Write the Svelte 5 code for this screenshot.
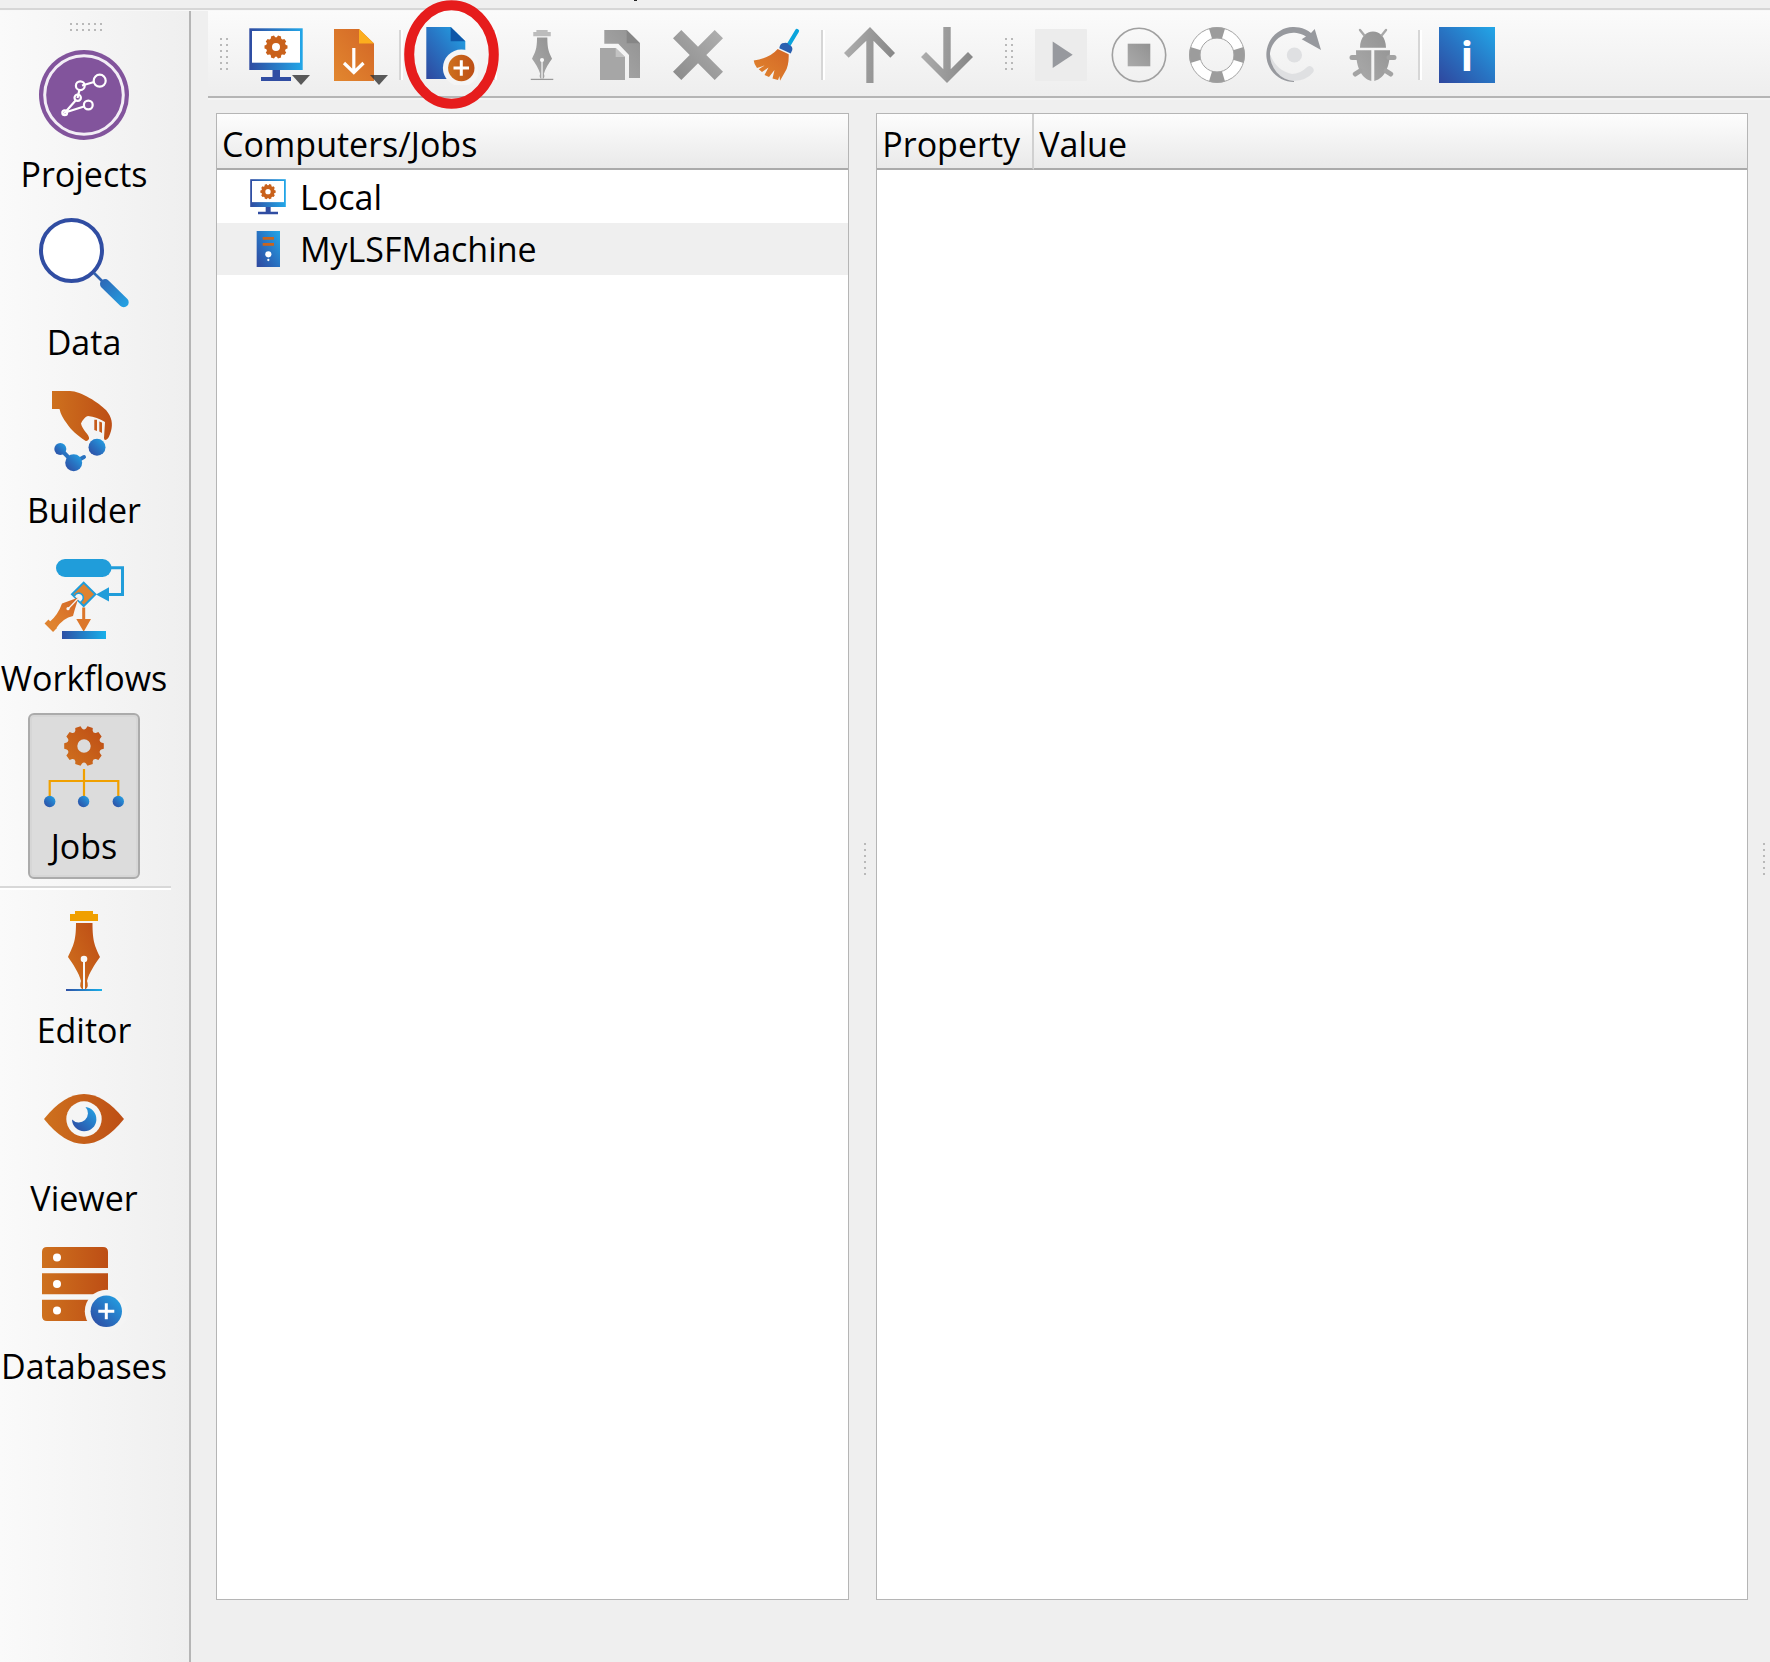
<script>
  const mainItems = ['Projects', 'Data', 'Builder', 'Workflows', 'Jobs'];
  const toolItems = ['Editor', 'Viewer', 'Databases'];
  const groups = [
    [
      { name: 'Add computer', icon: 'monitor', menu: true },
      { name: 'Download', icon: 'download', menu: true },
      null,
      { name: 'New job', icon: 'add', marked: true },
      null,
      { name: 'Edit', icon: 'pen', off: true },
      { name: 'Copy', icon: 'copy', off: true },
      { name: 'Delete', icon: 'cross', off: true },
      { name: 'Clean', icon: 'broom' },
      null,
      { name: 'Move up', icon: 'up', off: true },
      { name: 'Move down', icon: 'down', off: true }
    ],
    [
      { name: 'Run', icon: 'play', off: true },
      { name: 'Stop', icon: 'stop', off: true },
      { name: 'Rescue', icon: 'buoy', off: true },
      { name: 'Restart', icon: 'retry', off: true },
      { name: 'Debug', icon: 'bug', off: true },
      null,
      { name: 'Information', icon: 'info' }
    ]
  ];
  const computers = [
    { name: 'Local', icon: 'monitor' },
    { name: 'MyLSFMachine', icon: 'server' }
  ];
  let active = $state('Jobs');
  let selected = $state('MyLSFMachine');

  // Outline of a ten-toothed gear with a round hole.
  function gear(cx, cy, r, hole) {
    const at = (a, d) => `${(cx + d * Math.cos(a)).toFixed(2)},${(cy + d * Math.sin(a)).toFixed(2)}`;
    const step = Math.PI / 5;
    let d = '';
    for (let i = 0; i < 10; i++) {
      const a = i * step;
      d += `${i ? 'L' : 'M'}${at(a - 0.14, r)} L${at(a + 0.14, r)} L${at(a + 0.2, r * 0.88)} Q${at(a + step / 2, r * 0.78)} ${at(a + step - 0.2, r * 0.88)} `;
    }
    return `${d}Z M${cx - hole},${cy} a${hole},${hole} 0 1 0 ${hole * 2},0 a${hole},${hole} 0 1 0 ${-hole * 2},0 Z`;
  }
</script>

{#snippet nib(cap, body, base)}
  <path d="M36,5H54V8H59V15H31V8H36Z" fill={cap} />
  <path d="M37,17H53.5C53.5,36 56,40 61,51C56,58 50,67 48,75Q50,80 47,83H43Q40,80 42,75C40,67 34,58 29,51C34,40 37,36 37,17Z" fill={body} />
  <circle cx="45" cy="53" r="3.3" fill="#f8f8f8" />
  <path d="M44,53H46V83H44Z" fill="#f8f8f8" />
  <rect x="27" y="83" width="36" height="2" fill={base} />
{/snippet}

{#snippet sideIcon(name)}
  <svg class="side-icon" viewBox="0 0 90 90" aria-hidden="true">
    {#if name === 'Projects'}
      <circle cx="45" cy="45" r="45" fill="#82549c" />
      <g fill="none" stroke="#fff" stroke-width="2.2">
        <circle cx="45" cy="45" r="39.3" stroke="#f3eef6" stroke-width="3" />
        <circle cx="60.7" cy="30.7" r="6" />
        <circle cx="41.3" cy="35.7" r="4.4" />
        <circle cx="38.7" cy="47.7" r="3.2" />
        <circle cx="49.3" cy="55" r="4.4" />
        <circle cx="25.7" cy="62.7" r="2.4" />
        <path d="M43,35.5L55,32M40.5,39.5L38.5,48M37,50L26,62.5L45,56.5" />
      </g>
    {:else if name === 'Data'}
      <circle cx="32.5" cy="32.5" r="30.5" fill="#fff" stroke="#304da2" stroke-width="4" />
      <path d="M55,55L64,64" stroke="#3263ae" stroke-width="2.6" />
      <path d="M66,66L84.7,84.3" stroke="url(#handle)" stroke-width="10" stroke-linecap="round" />
    {:else if name === 'Builder'}
      <path d="M13,5H31C42,5 60,17 67,24C73,31 74,38 72,45Q70,52 68,53.3Q65,55 65,52L66,36Q58,31 49,30Q45,31 42,37.5C43,44 51,49 50,53Q48,56 46,54.5C39,50 32,44 27.7,37.3Q22,30 20.5,23H13Z" fill="url(#orangeH)" />
      <path d="M55.3,33.7H58V45L55.3,44ZM60.3,35.5L63,36.5V47L60.3,45.5Z" fill="#c65b1b" />
      <path d="M21.3,63L34.7,76.7L45,71" fill="none" stroke="#2a72bf" stroke-width="4" stroke-linecap="round" />
      <circle cx="21.3" cy="63" r="6" fill="url(#blue)" />
      <circle cx="34.7" cy="76.7" r="8.5" fill="url(#blue)" />
      <circle cx="58" cy="61.3" r="8.5" fill="url(#blue)" />
    {:else if name === 'Workflows'}
      <rect x="17" y="5" width="55.5" height="18" rx="9" fill="#209dda" />
      <path d="M72,13.7H83.5V40.5H69" fill="none" stroke="#209dda" stroke-width="3" />
      <path d="M57,40.5L70,33.3V47.5Z" fill="#209dda" />
      <path d="M44.7,28.6L56.4,40.3L44.7,52L33,40.3Z" fill="#df8330" stroke="#209dda" stroke-width="2" />
      <path d="M43.2,53.5H46.2V65H52L44.7,77.7L37.3,65H43.2Z" fill="#dc772b" />
      <rect x="23" y="77" width="44" height="8" fill="url(#blueH)" />
      <path d="M35.5,42A4.6,4.6 0 1 1 41.5,48" fill="#f3f3f3" stroke="#209dda" stroke-width="1.6" />
      <path d="M39.5,43.5L23,49.5Q19,61 10.5,68L17,74.5Q24,64 34,62L35.5,56.5Z" fill="url(#orangeSoft)" />
      <path d="M7.5,67.5L16,76" stroke="#df8330" stroke-width="5.4" />
      <path d="M29,55L40,43.5" stroke="#f5f5f5" stroke-width="1.2" />
      <circle cx="29" cy="54.7" r="1.6" fill="#f5f5f5" />
    {:else if name === 'Jobs'}
      <path d={gear(45, 24, 20, 6.7)} fill="url(#orange)" fill-rule="evenodd" />
      <path d="M45,47V75M10.7,75V59H79.3V75" fill="none" stroke="#f0a000" stroke-width="2.2" />
      <circle cx="10.7" cy="79.5" r="5.7" fill="url(#blue)" />
      <circle cx="44.6" cy="79.5" r="5.7" fill="url(#blue)" />
      <circle cx="79.3" cy="79.5" r="5.7" fill="url(#blue)" />
    {:else if name === 'Editor'}
      {@render nib('#f0a000', 'url(#orange)', 'url(#blueH)')}
    {:else if name === 'Viewer'}
      <path d="M5,45Q25,20 45,20Q65,20 85,45Q65,70 45,70Q25,70 5,45Z" fill="url(#orangeH)" />
      <circle cx="45" cy="45" r="17.7" fill="#f5f5f5" />
      <path d="M46.5,33A12.2,12.2 0 1 1 33,45.5A8.5,8.5 0 1 0 46.5,33Z" fill="url(#blue)" />
    {:else}
      <path d="M3,26V10Q3,5 8,5H64Q69,5 69,10V26ZM3,31.3H69V52.3H3ZM3,57.7H69V79H8Q3,79 3,74Z" fill="url(#orangeH)" />
      <g fill="#fff">
        <circle cx="18" cy="15.5" r="4" />
        <circle cx="18" cy="42" r="4" />
        <circle cx="18" cy="68.5" r="4" />
      </g>
      <circle cx="67.3" cy="69.3" r="21.5" fill="#f4f4f4" />
      <circle cx="67.3" cy="69.3" r="15.7" fill="url(#blue)" />
      <path d="M59.3,69.3H75.3M67.3,61.3V77.3" stroke="#fff" stroke-width="3" />
    {/if}
  </svg>
{/snippet}

{#snippet toolIcon(name)}
  <svg class="tool-icon" viewBox="0 0 60 60" aria-hidden="true">
    {#if name === 'monitor'}
      <rect x="3.3" y="3.3" width="53.4" height="41.7" fill="url(#blueH2)" />
      <rect x="6" y="6" width="48" height="31.7" fill="#fff" />
      <path d={gear(30, 22, 11.6, 4)} fill="#c9611b" fill-rule="evenodd" />
      <path d="M26.5,45H34V52H45V56H15V52H26.5Z" fill="#304da2" />
    {:else if name === 'server'}
      <rect x="13" y="3" width="35" height="54" fill="url(#blue)" />
      <path d="M22,12H39V16H22ZM22,21H39V25H22Z" fill="#c8641f" />
      <circle cx="30.5" cy="38" r="4.6" fill="#fff" />
      <circle cx="30.5" cy="46.5" r="1.7" fill="#fff" />
    {:else if name === 'download'}
      <path d="M10,4H35L50,18.5V56H10Z" fill="url(#orangeSoft)" />
      <path d="M35,4L50,18.5H35Z" fill="#fcae1e" />
      <path d="M29.8,23V47.5M20,38L29.8,47.5L39.5,38" fill="none" stroke="#fff" stroke-width="3.2" />
    {:else if name === 'add'}
      <path d="M8.3,2H32.7L47.3,16.3V54H8.3Z" fill="url(#blue)" />
      <path d="M32.7,2L47.3,16.3H32.7Z" fill="#0f57a8" />
      <circle cx="43.3" cy="43" r="18.4" fill="#f5f5f5" />
      <circle cx="43.3" cy="43" r="13.2" fill="url(#orangeH)" />
      <path d="M35.5,43H51M43.3,35.3V50.7" stroke="#fff" stroke-width="3" />
    {:else if name === 'pen'}
      <g transform="translate(1.9 1.9) scale(.625)">{@render nib('#bcbcbc', 'url(#grey)', '#999')}</g>
    {:else if name === 'copy'}
      <path d="M14.3,5H36.7L50,18.3V53H39V30L28.3,18.7H14.3Z" fill="url(#grey)" />
      <path d="M36.7,5L50,18.3H36.7Z" fill="#868686" />
      <path d="M10,23H25.7L35,32V55H10Z" fill="#a6a6a6" />
      <path d="M25.7,23L35,32H25.7Z" fill="#c2c2c2" />
    {:else if name === 'cross'}
      <path d="M13.3,5L30,21.7L46.7,5L55,13.3L38.3,30L55,46.7L46.7,55L30,38.3L13.3,55L5,46.7L21.7,30L5,13.3Z" fill="url(#greyUp)" />
    {:else if name === 'broom'}
      <path d="M51,6L42,21" stroke="#0ba4dc" stroke-width="4.2" stroke-linecap="round" />
      <path d="M33.3,23.3Q34,18 38,18Q42,17 43,20Q47,21 46.3,25L44.7,28.5Z" fill="#2b60b0" />
      <path d="M31.7,24L42.7,29.3Q43,41 39,47L34,55.7L33.5,51L32,55L26.5,53.5L28.5,45L23,52L18.5,50L22.5,42.5L16,47L12.7,44.3L18.5,40.5L11,43Q8,39 7.7,35.5Q24,33 31.7,24Z" fill="url(#orangeSoft)" />
    {:else if name === 'up'}
      <path d="M30,2L55,28L50.3,32.7L33.5,15.7V58H26.3V15.7L8.7,32.7L4,28Z" fill="url(#greyDown)" />
    {:else if name === 'down'}
      <path d="M29,58L55,32L50,27L32.7,44.3V2H25.3V44.3L8,27L3,32Z" fill="url(#greyDown)" />
    {:else if name === 'play'}
      <rect x="4" y="4" width="52" height="52" rx="1" fill="#ececec" />
      <path d="M21.7,16.5L41.7,29.8L21.7,43Z" fill="#97999e" />
    {:else if name === 'stop'}
      <circle cx="30" cy="30" r="26.7" fill="none" stroke="#a0a0a0" stroke-width="1.6" />
      <rect x="18.7" y="18.7" width="22.6" height="22.6" fill="url(#grey)" />
    {:else if name === 'buoy'}
      <g fill="none">
        <circle cx="30" cy="30" r="22.3" stroke="#fff" stroke-width="11" />
        <circle cx="30" cy="30" r="22.3" stroke="#9c9c9c" stroke-width="11" pathLength="360" stroke-dasharray="34 56" stroke-dashoffset="17" />
        <circle cx="30" cy="30" r="27.5" stroke="#a2a2a2" />
        <circle cx="30" cy="30" r="17" stroke="#a2a2a2" />
      </g>
    {:else if name === 'retry'}
      <path d="M4.5,28A25,27 0 0 0 29,56Q42,55 47.5,48A4,4 0 0 0 41.5,42.5Q35,49 27,49Q11,46 4.5,28Z" fill="#dfe0e2" />
      <circle cx="29.4" cy="30" r="7.6" fill="#dfe0e2" />
      <path d="M29,57A27.5,27.5 0 1 1 46,8L49.7,4L56,25L36.7,14.3L41,11.5A23.5,23.5 0 0 0 5,28A25.5,27 0 0 0 29,56Z" fill="#97999e" />
    {:else if name === 'bug'}
      <path d="M17,22.7C17,1 43,1 43,22.7ZM13,25.3H28.3V56C17,53 13,40 13,25.3ZM31.3,25.3H47C47,40 43,53 31.3,56Z" fill="url(#grey)" />
      <path d="M17,5L21,10M43,5L39,10" stroke="#a8a8a8" stroke-width="2.4" stroke-linecap="round" />
      <path d="M9,32.5H14M51,32.5H46M12.3,49L17,46M47.7,49L43,46" stroke="#a3a3a3" stroke-width="5" stroke-linecap="round" />
    {:else}
      <rect x="2" y="2" width="56" height="56" fill="url(#blue)" />
      <text class="info-letter" x="30" y="46" text-anchor="middle">i</text>
    {/if}
  </svg>
{/snippet}

{#snippet sideButton(name)}
  <button class="side-item" class:active={active === name} onclick={() => (active = name)}>
    {@render sideIcon(name)}
    <span>{name}</span>
  </button>
{/snippet}

<svg class="defs" width="0" height="0" aria-hidden="true">
  <defs>
    <linearGradient id="blue" x1="0" y1="1" x2="1" y2="0"><stop offset="0" stop-color="#2f479e" /><stop offset=".5" stop-color="#2874c3" /><stop offset="1" stop-color="#22a7e8" /></linearGradient>
    <linearGradient id="blueH"><stop offset="0" stop-color="#2f51a5" /><stop offset="1" stop-color="#18b0ea" /></linearGradient>
    <linearGradient id="blueH2"><stop offset="0" stop-color="#2f4ba1" /><stop offset="1" stop-color="#22a7e8" /></linearGradient>
    <linearGradient id="handle" gradientUnits="userSpaceOnUse" x1="62" y1="62" x2="88" y2="88"><stop offset="0" stop-color="#2d67b6" /><stop offset="1" stop-color="#24a2e3" /></linearGradient>
    <linearGradient id="orange" x1="0" y1="1" x2="1" y2="0"><stop offset="0" stop-color="#d0721e" /><stop offset="1" stop-color="#bd4c15" /></linearGradient>
    <linearGradient id="orangeH"><stop offset="0" stop-color="#ce711e" /><stop offset="1" stop-color="#bd4e15" /></linearGradient>
    <linearGradient id="orangeSoft" x1="0" y1="1" x2="1" y2="0"><stop offset="0" stop-color="#e2872f" /><stop offset="1" stop-color="#d36626" /></linearGradient>
    <linearGradient id="grey" x1="0" y1="1" x2="1" y2="0"><stop offset="0" stop-color="#aaa" /><stop offset="1" stop-color="#929292" /></linearGradient>
    <linearGradient id="greyUp" x1="0" y1="1" x2="1" y2="0"><stop offset="0" stop-color="#8a8a8a" /><stop offset="1" stop-color="#b0b0b0" /></linearGradient>
    <linearGradient id="greyDown" x1="0" y1=".5" x2="1" y2=".6"><stop offset="0" stop-color="#adadad" /><stop offset="1" stop-color="#868686" /></linearGradient>
  </defs>
</svg>

<div class="window">
  <div class="menubar"><i></i></div>
  <div class="body">
    <nav class="sidebar" aria-label="Views">
      <div class="grip wide"></div>
      {#each mainItems as name}{@render sideButton(name)}{/each}
      <hr />
      {#each toolItems as name}{@render sideButton(name)}{/each}
    </nav>

    <main>
      <div class="toolbar" role="toolbar" aria-label="Job actions">
        {#each groups as group}
          <div class="group">
            <div class="grip tall"></div>
            {#each group as tool}
              {#if tool}
                <button class="tool" aria-label={tool.name} disabled={tool.off}>
                  {@render toolIcon(tool.icon)}
                  {#if tool.menu}
                    <svg class="menu-mark" viewBox="0 0 18 10" aria-hidden="true"><path d="M0,0H18L9,10Z" /></svg>
                  {/if}
                  {#if tool.marked}
                    <svg class="ring" viewBox="0 0 95 109" aria-hidden="true"><ellipse cx="47.5" cy="54.5" rx="42.3" ry="49.3" /></svg>
                  {/if}
                </button>
              {:else}
                <div class="rule"></div>
              {/if}
            {/each}
          </div>
        {/each}
      </div>

      <div class="panes">
        <section class="pane tree">
          <h2>Computers/Jobs</h2>
          <ul>
            {#each computers as computer}
              <li>
                <button class="row" class:selected={selected === computer.name} onclick={() => (selected = computer.name)}>
                  {@render toolIcon(computer.icon)}
                  <span>{computer.name}</span>
                </button>
              </li>
            {/each}
          </ul>
        </section>
        <div class="splitter"><div class="dots"></div></div>
        <section class="pane details">
          <table>
            <thead><tr><th class="property" scope="col">Property</th><th scope="col">Value</th></tr></thead>
          </table>
        </section>
        <div class="splitter edge"><div class="dots"></div></div>
      </div>
    </main>
  </div>
</div>

<style>
  :global(body) {
    margin: 0;
    background: #efefef;
  }
  .window {
    display: flex;
    flex-direction: column;
    min-height: 100vh;
    overflow: hidden;
    color: #000;
    background: #efefef;
    font: 34px/46px 'Open Sans', 'Noto Sans', sans-serif;
  }
  .defs {
    position: absolute;
  }
  button {
    margin: 0;
    padding: 0;
    border: 0;
    background: none;
    color: inherit;
    font: inherit;
  }
  svg {
    display: block;
  }
  .menubar {
    box-sizing: border-box;
    height: 11px;
    border-bottom: 1px solid #f8f8f8;
    box-shadow: inset 0 -2px #d6d6d6;
  }
  .menubar i {
    display: block;
    width: 3px;
    height: 1px;
    margin-left: 35.8%;
    background: #222;
  }
  .body {
    flex: 1;
    display: flex;
  }
  .sidebar {
    box-sizing: border-box;
    flex: none;
    display: flex;
    flex-direction: column;
    align-items: center;
    gap: 2px;
    width: 191px;
    padding-right: 21px;
    border-right: 2px solid #b5b5b5;
    background: linear-gradient(90deg, #fafafa, #efefef);
  }
  .grip,
  .dots {
    background: conic-gradient(from 270deg at 2px 2px, #b9b9b9 90deg, transparent 0) 0 0 / 6px 6px;
  }
  .grip.wide {
    width: 34px;
    height: 8px;
    margin: 12px 0 8px 6px;
  }
  .grip.tall {
    width: 8px;
    height: 34px;
    margin: 0 9px 0 12px;
  }
  .side-item {
    box-sizing: border-box;
    flex: none;
    display: flex;
    flex-direction: column;
    align-items: center;
    gap: 11px;
    height: 166px;
    min-width: 112px;
    padding: 7px 0 8px;
    border: 2px solid transparent;
    border-radius: 6px;
    white-space: nowrap;
  }
  .side-item.active {
    border-color: #ababab;
    background: #dcdcdc;
    box-shadow: inset 0 0 0 2px #d6d6d6;
  }
  .side-icon {
    width: 90px;
    height: 90px;
  }
  hr {
    align-self: stretch;
    height: 2px;
    margin: 5px -3px 5px 0;
    border: 0;
    border-top: 2px solid #d8d8d8;
    background: #fff;
  }
  main {
    flex: 1;
    min-width: 0;
    display: flex;
    flex-direction: column;
  }
  .toolbar {
    display: flex;
    gap: 6px;
    margin-left: 17px;
    padding: 14px 0 11px;
    border-bottom: 2px solid #b5b5b5;
    background: linear-gradient(#fbfbfb, #eee);
    box-shadow: 0 2px #f4f4f4;
  }
  .group {
    display: flex;
    align-items: center;
  }
  .tool {
    position: relative;
    display: grid;
    place-items: center;
    width: 78px;
    height: 60px;
  }
  .tool-icon {
    width: 60px;
    height: 60px;
  }
  .menu-mark {
    position: absolute;
    right: 5px;
    bottom: 0;
    width: 18px;
    height: 10px;
    fill: #333;
    fill-opacity: 0.8;
  }
  .ring {
    position: absolute;
    left: -5px;
    top: -25px;
    z-index: 1;
    width: 95px;
    height: 109px;
    fill: none;
    stroke: #e61c1c;
    stroke-width: 10;
  }
  .rule {
    width: 2px;
    height: 50px;
    margin: 0 6px;
    border-left: 2px solid #d6d6d6;
    background: #fff;
  }
  .info-letter {
    fill: #fff;
    font: 700 42px 'Open Sans', sans-serif;
  }
  .panes {
    flex: 1;
    display: flex;
    padding: 15px 0 62px 25px;
  }
  .pane {
    box-sizing: border-box;
    min-width: 0;
    border: 1px solid #b5b5b5;
    background: #fff;
  }
  .tree {
    flex: 633 1 0;
  }
  .details {
    flex: 872 1 0;
  }
  h2,
  th {
    box-sizing: border-box;
    height: 56px;
    margin: 0;
    padding: 7px 0 1px 5px;
    border-bottom: 2px solid #aaa;
    background: linear-gradient(#fdfdfd, #e9e9e9);
    font: inherit;
    text-align: left;
  }
  ul {
    margin: 0;
    padding: 1px 0 0;
    list-style: none;
  }
  .row {
    display: flex;
    align-items: center;
    gap: 12px;
    width: 100%;
    height: 52px;
    padding-left: 31px;
  }
  .row.selected {
    background: #efefef;
  }
  .row .tool-icon {
    width: 40px;
    height: 40px;
  }
  table {
    width: 100%;
    border-collapse: separate;
    border-spacing: 0;
    table-layout: fixed;
  }
  .property {
    width: 157px;
    border-right: 2px solid #d0d0d0;
  }
  .splitter {
    box-sizing: border-box;
    flex: none;
    display: flex;
    align-items: center;
    justify-content: center;
    width: 27px;
    padding: 6px 0 0 4px;
  }
  .splitter.edge {
    width: 22px;
    padding-left: 10px;
  }
  .dots {
    width: 2px;
    height: 34px;
  }
</style>
